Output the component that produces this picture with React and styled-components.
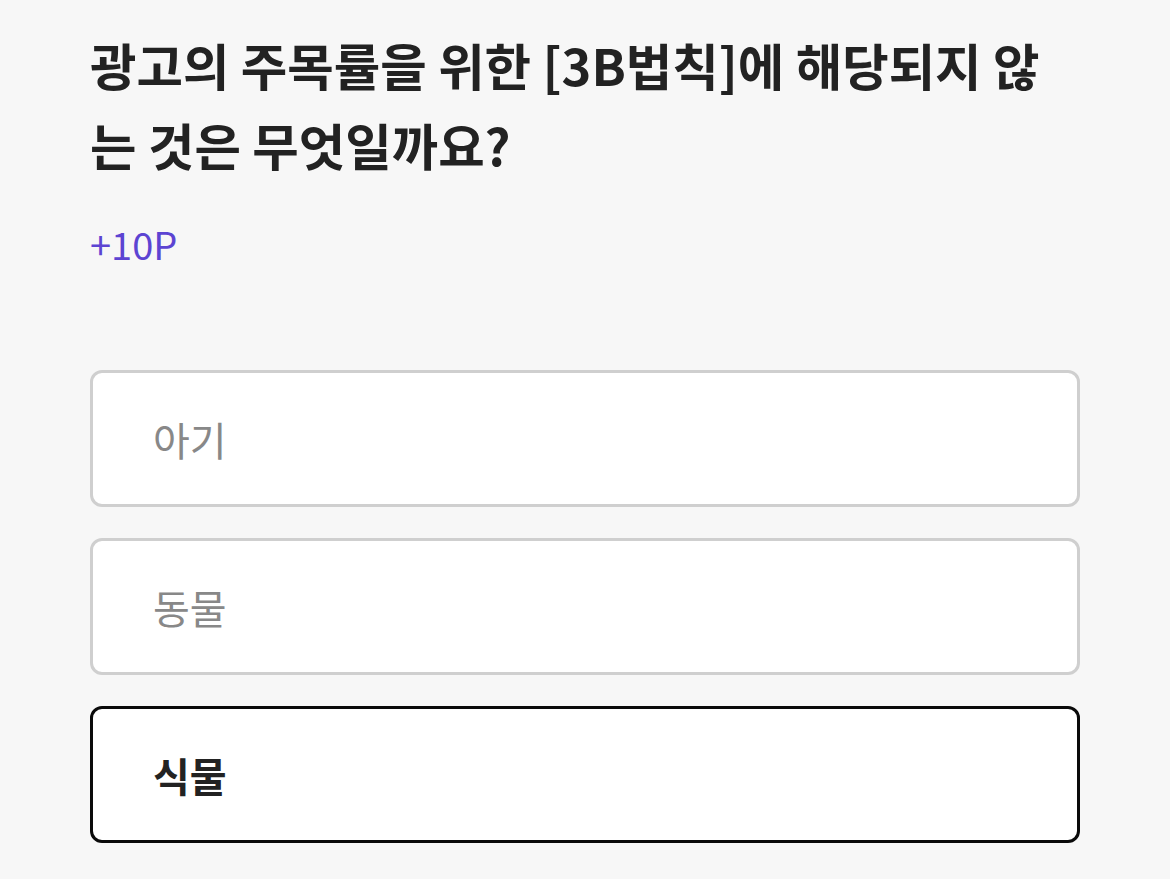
import styled, { createGlobalStyle } from "styled-components";

const GlobalStyle = createGlobalStyle`
  html, body {
    margin: 0;
    padding: 0;
    background: #f7f7f7;
  }
  body {
    font-family: "Noto Sans CJK KR", "Noto Sans", sans-serif;
  }
`;

const options = [
  { id: 1, label: "아기", selected: false },
  { id: 2, label: "동물", selected: false },
  { id: 3, label: "식물", selected: true },
];

const App = () => {
  return (
    <>
      <GlobalStyle />
      <Page>
        <Question>광고의 주목률을 위한 [3B법칙]에 해당되지 않는 것은 무엇일까요?</Question>
        <Point>+10P</Point>
        <OptionList>
          {options.map(({ id, label, selected }) => (
            <Option key={id} $selected={selected}>
              {label}
            </Option>
          ))}
        </OptionList>
      </Page>
    </>
  );
};

const Page = styled.main`
  width: 990px;
  padding: 24px 90px 0 90px;
  min-height: 855px;
  box-sizing: content-box;
`;

const Question = styled.h1`
  margin: 0;
  padding-right: 20px;
  font-size: 50.5px;
  font-weight: 700;
  line-height: 80px;
  color: #222;
  word-break: break-all;
`;

const Point = styled.div`
  margin-top: 38px;
  font-size: 38px;
  line-height: 44px;
  color: #5c44d2;
`;

const OptionList = styled.div`
  margin-top: 104px;
  display: flex;
  flex-direction: column;
  gap: 31px;
`;

const Option = styled.button`
  display: flex;
  align-items: center;
  height: 137px;
  box-sizing: border-box;
  padding: 0 0 0 60px;
  background: #fff;
  border: 3px solid ${({ $selected }) => ($selected ? "#0a0a0a" : "#cfcfcf")};
  border-radius: 12px;
  font-family: "Noto Sans CJK KR", "Noto Sans", sans-serif;
  font-size: 40px;
  font-weight: ${({ $selected }) => ($selected ? 700 : 400)};
  color: ${({ $selected }) => ($selected ? "#222" : "#888")};
  text-align: left;
  cursor: pointer;
`;

export default App;
